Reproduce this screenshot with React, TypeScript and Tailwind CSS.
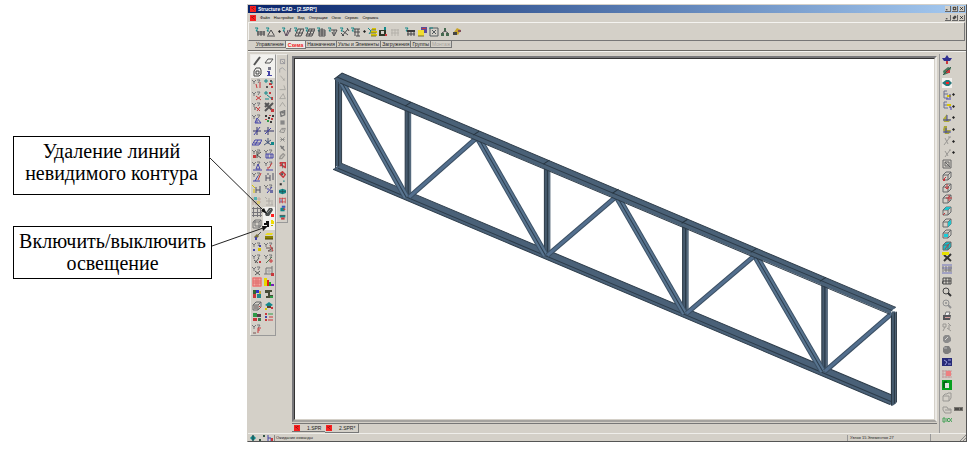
import type { ReactNode } from 'react';

type Part = { d: string; stroke?: string; fill?: string; w?: number };
type Icon = Part[];

// Drawing helpers: icons live on a 10x10 grid
const s = (d: string, stroke = '#4a4a4c', w = 1): Part => ({ d, stroke, w });
const f = (d: string, fill = '#3a3a3a'): Part => ({ d, fill });

const RED = '#c8383c';
const BLUE = '#4444a8';
const TEAL = '#12888a';
const GREEN = '#2f9a48';
const GRAY = '#9a9894';
const GOLD = '#d8c400';

const fork = s('M0 1L2 3L4 1M2 3V5M5 1H8L6 4', '#77777a');
const node = s('M0 2H4M2 0V4', TEAL);
const cube = s('M1 4H6V9H1ZM1 4L4 1H9L6 4M9 1V6L6 9', '#66696b');

const mainIcons: (Icon | 'arrow')[] = [
    [s('M0 1H3L1 4H3', TEAL), s('M2 5H10M3 4V9M6 4V9M9 4V9M2 7H10')],
    [s('M0 1H3L1 4H3', TEAL), s('M2 8L5 3L8 8M1 9H9')],
    'arrow',
    [s('M0 1H3L1 4H3', TEAL), s('M2 4L4 9L6 3M5 9L9 1M7 4H9', '#5a4a5c')],
    [s('M0 1H3L1 4H3', TEAL), s('M4 2H10L7 9H1ZM7 2L4 9M3 6H9')],
    [s('M0 1H3L1 4H3', TEAL), s('M4 2H10L7 9H1ZM7 2L4 9M3 4H9M2 7H8')],
    [s('M0 1H3L1 4H3', TEAL), s('M2 3H8V9H2ZM2 5H8M2 7H8M5 1V9')],
    [s('M0 1H3L1 4H3', TEAL), s('M3 3H9L6 9L4 5M6 3V7')],
    [s('M0 1H3L1 4H3', TEAL), s('M2 9L8 2M3 4L8 8M7 1L9 4M1 6L4 9')],
    [s('M0 1H3L1 4H3', TEAL), s('M3 2H9M3 5H9M4 2V9M7 2V9M5 9H9')],
    'arrow',
    [s('M1 1L4 4L2 7', TEAL), s('M5 2H9M4 5H10M4 8H10', GOLD, 2), s('M4 3H9M3 6H9M4 9H9', '#777733')],
    [f('M1 3H8V9H1Z', '#303828'), f('M3 4H6V7H3Z', '#d4d0c8'), f('M6 0H8V3H6Z', TEAL), f('M7 7H9V9H7Z', RED)],
    [s('M2 2V9M5 2V9M8 2V9M1 3H9M1 6H9', '#b4b1aa')],
];

const extraIcons: Icon[] = [
    [s('M0 1H3L1 4H3', TEAL), f('M2 3H10V5H2Z'), s('M3 5V9M6 5V9M9 5V9M2 7H10')],
    [f('M4 0H10V6H4Z', '#5a4d9c'), f('M1 3H7V9H1Z', '#f0dc30'), f('M5 1H9V2H5Z', RED), s('M1 9H7', '#77702c')],
    [s('M1 1H9M1 1V9M9 1V9M1 9H9', '#555c60'), s('M3 3L7 7M7 3L3 7', '#555c60'), s('M0 1H4', TEAL)],
    [f('M4 1H6V4H4ZM1 6H4V9H1ZM6 6H9V9H6Z', '#466a50'), s('M5 4L2 6M5 4L8 6')],
    [f('M2 5L5 1L9 3L6 8Z', '#c8a42a'), f('M1 5H5V8H1Z', '#444444'), f('M6 3H9V5H6Z', '#85505c')],
];

const leftIcons: (Icon | null)[] = [
    [s('M2 9L8 1', '#555555', 2)],
    [s('M1 7L4 3H9L6 7Z', '#555555')],
    [s('M2 4L4 1H8L9 3V7L7 9H2ZM4 4H7V7H4Z', '#444444')],
    [f('M4 0H7V3H4Z', '#777788'), f('M3 4H6V8H8V9H3V8H4V5H3Z', BLUE)],
    [fork, s('M4 5L5 9M8 3V9', RED)],
    [node, f('M6 1H8V3H6ZM2 7H4V9H2Z', '#555'), f('M5 4H8V6H5ZM7 7H9V9H7Z', RED), s('M8 2V5', TEAL)],
    [fork, s('M4 5L9 9M9 5L4 9', RED)],
    [node, f('M5 1H7V3H5ZM7 6H9V9H7Z', RED), s('M3 4L8 8M1 8H5', TEAL)],
    [fork, s('M4 5L8 9M8 5L5 9', RED), s('M3 5V8', '#555555')],
    [s('M1 1L8 8M9 1L1 9M5 1L1 5', '#555555', 2), f('M7 7H10V10H7Z', RED)],
    [fork, s('M5 4L3 9H9ZM5 6V9', BLUE)],
    [f('M1 1H3V3H1ZM4 3H6V5H4ZM8 1H10V3H8ZM6 7H8V9H6Z'), f('M5 1H7V2H5ZM1 5H3V6H1ZM7 4H9V6H7Z', RED), f('M3 6H5V8H3Z', GREEN)],
    [s('M1 5H9M5 1V9', '#333366'), s('M2 9L8 1', BLUE)],
    [s('M0 5H10M4 1V9', '#333366'), s('M1 8L7 2', BLUE)],
    [s('M0 8L3 3H10L7 8ZM3 8L6 3M2 6H9', BLUE)],
    [s('M4 1V7M1 3L7 8M0 8L7 3', '#445577'), f('M7 5H10V8H7Z', TEAL)],
    [fork, s('M5 2V9M9 3L5 6L9 9'), f('M1 6H4V9H1Z', RED)],
    [fork, s('M2 5H9V9H2ZM4 5V9M7 5V9', BLUE)],
    [fork, s('M6 3L4 8H8ZM1 9H10', BLUE)],
    [fork, s('M8 2L5 7M4 6V9', RED), s('M2 9H9', BLUE)],
    [fork, s('M9 1L6 8', RED), s('M3 9L6 4M1 9H8', BLUE)],
    [s('M2 3V9M2 6H6M6 3V9M9 1V8M4 1V3', '#555566')],
    [s('M0 1L3 4M2 9V5', GOLD), s('M4 3V9M8 2V9M4 6H8', '#555566')],
    [fork, s('M3 9L8 3M3 5H5', BLUE), f('M6 6H9V9H6Z', '#6d6da4')],
    [s('M1 1V9M4 1V9M7 1V9M1 3H9M1 6H9', '#c0aaa2'), f('M2 1H5V4H2Z', '#55b0b0'), f('M5 5H8V8H5Z', '#d8c870')],
    [s('M1 1L3 3M5 2V8M2 5H7M2 9H9M8 4V9', '#aeaaa5')],
    [s('M1.5 0V10M5.5 0V10M8.5 0V10M0 1.5H10M0 5.5H10M0 8.5H10', '#77757a')],
    [f('M1 7L5 1H8L9 3L5 9H2Z', '#4c5050'), s('M3 6L7 2', '#8a8e8e'), f('M7 7H10V10H7Z', '#ff2020')],
    [s('M1 3H7V9H1ZM1 3L3 1H9V7L7 9M7 3L9 1M3 1V7H9', '#777777')],
    [f('M0 4H2V2H5V8H3V6H0Z', '#101010'), f('M7 1H9V2H10V5H7Z', '#f0dc00'), f('M7 6H9V7H7Z', '#b9b100')],
    [s('M9 1L5 5', '#555'), s('M6 4L3 7', '#77703a', 3), f('M3 6H5V9H3Z', BLUE)],
    [f('M1 4L3 2H9L8 4Z', '#eadb20'), f('M1 5H9V8H1Z', '#8b8100'), s('M1 8H9', '#484300')],
    [fork, f('M6 6H9V9H6Z', GOLD), f('M1 7H3V9H1ZM7 3H9V5H7Z', BLUE)],
    [fork, s('M2 6L9 6L4 9H9', '#665555'), s('M6 3L9 9', RED)],
    [fork, s('M3 9L7 4M2 6L6 9', '#555'), f('M7 7H9V9H7Z', RED)],
    [fork, s('M2 9L8 3', '#557755'), s('M6 6H8V8H6Z', RED)],
    [fork, s('M3 5L8 9M8 5L3 9', '#555')],
    [s('M2 2H8V8H2ZM0 8H2M8 0V2', '#777777'), s('M2 5H8M5 2V8', '#aaaaaa'), f('M7 7H10V10H7Z', RED)],
    [f('M0 0H10V10H0Z', '#f3a7a0'), s('M1 1H9V9H1ZM1 4H9M1 6H9M4 1V9M6 1V9', '#e06a6a')],
    [f('M0 1H3V9H0Z', '#e8d800'), f('M3 3H5V9H3Z', '#dd2222'), f('M5 5H7V9H5Z', '#22aa22'), f('M7 7H10V9H7Z', '#7722bb')],
    [f('M1 1H4V5H1Z', '#336633'), f('M4 1H7V4H4Z', '#3333cc'), f('M7 2H9V6H7Z', '#ccaa33'), f('M1 5H4V9H1Z', RED), f('M5 5H9V9H5Z', '#22888c')],
    [f('M1 1H8V3H6V6H9V9H2V7H4V4H1Z', '#474c38'), f('M6 7H9V9H6Z', GREEN)],
    [cube, f('M2 4H6V8H2Z', '#958f8c'), s('M7 5L9 7', RED)],
    [f('M1 4L5 1L9 4L5 6Z', TEAL), f('M3 5H7V7H3Z', '#554433'), f('M1 7H3V9H1Z', GOLD), f('M7 6H9V8H7Z', RED)],
    [f('M1 1H5V5H1Z', GREEN), f('M5 2H9V5H5Z', '#5b3d49'), f('M1 6H5V9H1Z', RED), f('M6 6H9V9H6Z', '#39774b')],
    [f('M1 1H3V3H1ZM1 7H3V9H1Z', RED), f('M1 4H3V6H1Z', BLUE), s('M4 2H9', GREEN), s('M5 5H9M4 8H9', RED)],
    [fork, s('M6 9V4H9M6 6H8', RED), s('M1 9H4', '#775555')],
    null,
];

const sideIcons: Icon[] = [
    [s('M2 2H8V8H2ZM4 4L8 8', '#888890')],
    [s('M1 8V3L5 1L9 5', '#8f9298')],
    [s('M2 1L8 8M6 8L8 5', GRAY)],
    [s('M1 8H9L7 2', GRAY)],
    [s('M1 8L6 1L9 8Z', GRAY)],
    [s('M1 8L5 2L9 8', GRAY)],
    [s('M2 3L8 1V7L3 9ZM4 4H7', '#777777', 2)],
    [f('M2 2H8V8H2Z', '#888888')],
    [s('M1 7L4 2H9L7 8ZM4 4H7', '#777777')],
    [s('M2 2L8 8M8 2L2 8M2 5H8', '#777777')],
    [s('M2 1L8 8M3 5L7 2', '#777777', 2)],
    [s('M1 8L4 8L8 3L6 1L2 5Z', GRAY, 2)],
    [s('M1 1H9V9M1 1L8 8M1 5H5', RED, 2), s('M5 1V9', '#555')],
    [s('M1 4L5 1L9 5L6 9Z', RED, 2), f('M3 3H6V6H3Z', '#555')],
    [f('M1 6H4V9H1Z', '#333333'), f('M6 2H8V4H6Z', TEAL)],
    [f('M0 3L5 1L10 3V7L5 9L0 7Z', TEAL), s('M0 5H10M5 2V8', '#225555')],
    [s('M1 1V9M5 1V9M9 1V9M1 2H9M1 7H9', RED), s('M3 3V8', BLUE)],
    [f('M4 1H9V4H4Z', '#3f55c0'), f('M2 4H8V9H2Z', TEAL), f('M6 5H9V7H6Z', RED)],
    [f('M1 2H9V5H1Z', TEAL), f('M3 5H8V8H3Z', RED), s('M1 2H9', '#334444')],
];

const viewIcons: { icon: Icon; arrow?: boolean; pressed?: boolean; badge?: boolean }[] = [
    { icon: [f('M5 0L7 3H10L8 6H6V9H4V6H2L0 3H3Z', '#303090'), f('M4 6H6V9H4Z', RED)] },
    { icon: [f('M1 5L6 1L9 2L7 7L2 9Z', '#477a5f'), f('M4 4H8V7H4Z', RED), s('M1 9L9 1', '#345b4a')] },
    { icon: [f('M0 5L4 2H7L10 5L7 8H4Z', '#26777a'), f('M4 4H7V6H4Z', '#ff2020')], pressed: true },
    { icon: [s('M5 1H2V8H6M2 4H6', '#6a7090'), s('M5 6H9', GOLD, 2), s('M4 9H9M8 4V8', BLUE)], arrow: true },
    { icon: [s('M5 1H2V7H6M2 4H7', '#6a7090'), s('M5 4H9', GOLD, 2), s('M7 6H9V9', BLUE)], arrow: true },
    { icon: [f('M1 6L5 1V6H9L7 9H2Z', '#b0ac3b'), s('M1 7H9M5 2V8', '#444aa8')], arrow: true },
    { icon: [f('M2 1H5V5H9L7 9H3L1 5Z', '#a8a43a'), s('M1 7H9M4 3V8', '#444aa8')], arrow: true },
    { icon: [s('M3 2L6 8M8 1L2 9M6 1H9', GRAY)], arrow: true },
    { icon: [s('M3 3L6 8M8 2L3 9M7 2H9', GRAY)], arrow: true },
    { icon: [s('M1 1H9V9H1ZM3 3H7V7H3ZM3 3L8 8', '#666666')] },
    { icon: [cube, s('M1 9L4 6', RED), f('M1 8H3V10H1Z', RED)] },
    { icon: [cube, s('M5 1V6M3 4L5 6L7 4', RED)] },
    { icon: [cube, s('M4 4H10M7 1V7', RED)] },
    { icon: [cube, f('M2 4L4 1H9L6 4Z', '#22c2cc'), s('M1 9L3 7', RED)] },
    { icon: [cube, f('M6 4L9 2V6L6 9Z', '#22c2cc')] },
    { icon: [cube, f('M2 5H6V8H2Z', '#19ced8')] },
    { icon: [f('M1 4L4 1H9V6L6 9H1Z', '#16bec8'), cube, s('M7 3L3 8', RED)] },
    { icon: [s('M2 3L9 9M9 2L2 9', '#333333', 2), f('M0 0H7V3H0Z', '#e7e000')] },
    { icon: [s('M0 1H10M0 4H10M0 9H10', '#6f73bd'), s('M1 2V8M4 2V8M7 2V8M9 2V8M2 6H9', '#77777c')] },
    { icon: [s('M1 2H9V8H1ZM1 5H9M4 2V8M7 2V8M0 8L1 5', '#494949')] },
    { icon: [s('M7 4A3 3 0 1 1 1 4A3 3 0 1 1 7 4', '#444444'), s('M6 6L9 9', '#333333', 2)] },
    { icon: [s('M7 4A3 3 0 1 1 1 4A3 3 0 1 1 7 4M3 4H5M4 3V5', '#929292'), s('M6 6L9 9', '#929292', 2)] },
    { icon: [f('M3 4L4 1H8L7 4Z', '#eeeeee'), s('M3 4L4 1H8L7 4', '#777777'), f('M1 4H9L8 9H1Z', '#55565a'), f('M3 6H8V7H3Z', '#d9a0a0')] },
    { icon: [s('M1 2H4V5H1ZM6 1L9 4M3 5L1 9M5 6L9 9M7 3V7', GRAY)] },
    { icon: [f('M3 1H7L9 4V7L6 9H3L1 7V3Z', '#8b8b8b'), s('M6 3L3 6', '#d5d5d5')] },
    { icon: [f('M3 1H7L9 4V7L6 9H3L1 7V3Z', '#7d7d7d'), s('M2 3L5 3', '#bbbbbb')] },
    { icon: [f('M0 1H10V9H0Z', '#272b78'), s('M2 3L5 5L3 8M6 3H9M6 7H9', '#9b9edb')] },
    { icon: [s('M1 1V9M4 1V9M7 1V9M0 2H10M0 5H10M0 8H10', '#c0a0a0'), f('M4 2H9V7H4Z', '#ee8080')] },
    { icon: [f('M0 0H10V10H0Z', '#08a020'), f('M3 3H7V8H3Z', '#e4e4e4'), s('M2 8V2H5', '#053b0c')] },
    { icon: [s('M1 4L3 2H5L6 1H9V6L7 9H1ZM1 4H7V9', GRAY)] },
    { icon: [s('M1 3H5L6 5H9V9H3L1 6ZM3 6H9', GRAY)], badge: true },
    { icon: [s('M1 3V7H3V3ZM5 3V7M5 5L7 3M5 5L7 7M7 3L10 7M10 3L7 7', '#46a158')] },
];

const menus = ['Файл', 'Настройки', 'Вид', 'Операции', 'Окно', 'Сервис', 'Справка'];

const tabs = ['Управление', 'Схема', 'Назначения', 'Узлы и Элементы', 'Загружения', 'Группы', 'Монтаж'];

function Glyph({ parts }: { parts: Icon }) {
    return (
        <svg viewBox="0 0 10 10" className="block h-[10px] w-[10px] shrink-0" aria-hidden="true">
            {parts.map((p, i) => (
                <path key={i} d={p.d} fill={p.fill ?? 'none'} stroke={p.stroke ?? 'none'} strokeWidth={p.w} />
            ))}
        </svg>
    );
}

function ToolButton({ parts, label, pressed }: { parts: Icon; label: string; pressed?: boolean }) {
    return (
        <button
            type="button"
            aria-label={label}
            className={`flex items-center justify-center ${pressed ? 'bg-[#f2f1ee]' : ''}`}
        >
            <Glyph parts={parts} />
        </button>
    );
}

function Arrow() {
    return (
        <svg viewBox="0 0 3 3" className="block h-[3px] w-[3px] shrink-0" aria-hidden="true">
            <path d="M0 1.5L1.5 0L3 1.5L1.5 3Z" fill="#222" />
        </svg>
    );
}

// Red square with the application's logo mark
function AppMark() {
    return (
        <svg viewBox="0 0 6 6" className="block h-[6px] w-[6px] shrink-0" aria-hidden="true">
            <path d="M0 0H6V6H0Z" fill="#f82020" />
            <path d="M1.5 1.5L4.5 4.5M4.5 1.5H3L1.5 3" stroke="#8c1010" strokeWidth="0.7" fill="none" />
        </svg>
    );
}

function WindowButtons({ middle }: { middle: string }) {
    const marks = [
        { label: 'Свернуть', d: 'M1 4.5H3' },
        { label: 'Развернуть', d: middle },
        { label: 'Закрыть', d: 'M1.5 1.5L4.5 4.5M4.5 1.5L1.5 4.5' },
    ];
    return (
        <div className="ml-auto flex items-center gap-px pr-px">
            {marks.map((m) => (
                <button key={m.label} type="button" aria-label={m.label} className="border-r border-b border-[#666] bg-[#d4d0c8]">
                    <svg viewBox="0 0 6 6" className="block h-[5px] w-[5px]">
                        <path d={m.d} stroke="#111" strokeWidth="1" fill="none" />
                    </svg>
                </button>
            ))}
        </div>
    );
}

function Callout({ children }: { children: ReactNode }) {
    return (
        <div className="border border-black bg-white text-center font-['Liberation_Serif',serif] text-[20px] leading-[22px] text-black">
            {children}
        </div>
    );
}

// Members of the truss, in view coordinates
const posts = [
    [405, 109, 197],
    [544, 167, 255],
    [682, 226, 313],
    [821, 285, 371],
];
const braces = [
    [341, 81, 406, 197],
    [478, 138, 545, 255],
    [617, 197, 684, 313],
    [755, 256, 822, 371],
];
const struts = [
    [409, 197, 476, 138],
    [547, 255, 615, 197],
    [686, 313, 753, 256],
    [824, 371, 891, 313],
];

function Truss() {
    return (
        <svg viewBox="295 59 638 359" preserveAspectRatio="xMinYMin meet" className="block h-full w-full" role="img" aria-label="Ферма">
            {/* Bottom chord */}
            <path d="M333 169L341 163L892 395V405L889 404Z" fill="#4a6178" />
            <path d="M333 169L889 404M338 168L890 401M341 163L892 395" stroke="#2d3c4a" fill="none" />
            {/* End post */}
            <path d="M335 79H341V166H335Z" fill="#465c70" />
            <path d="M335.5 80V168M338.5 82V166M341.5 86V163" stroke="#2b3844" fill="none" />
            {posts.map(([x, y1, y2]) => (
                <g key={x}>
                    <path d={`M${x} ${y1}H${x + 6}V${y2 - 3}L${x + 2} ${y2}H${x}Z`} fill="#465a6d" />
                    <path d={`M${x} ${y1}V${y2}M${x + 3} ${y1}V${y2 - 1}`} stroke="#293846" fill="none" />
                    <path d={`M${x + 5} ${y1}V${y2 - 3}`} stroke="#5d7183" fill="none" />
                </g>
            ))}
            {braces.map(([x1, y1, x2, y2]) => (
                <g key={x1} fill="none">
                    <path d={`M${x1} ${y1}L${x2} ${y2}`} stroke="#3c5166" strokeWidth="7" />
                    <path d={`M${x1} ${y1}L${x2} ${y2}`} stroke="#58748f" strokeWidth="5" />
                    <path d={`M${x1} ${y1}L${x2} ${y2}`} stroke="#2c3d4e" strokeWidth="1" />
                </g>
            ))}
            {struts.map(([x1, y1, x2, y2]) => (
                <g key={x1} fill="none">
                    <path d={`M${x1} ${y1}L${x2} ${y2}`} stroke="#3a4e62" strokeWidth="5" />
                    <path d={`M${x1} ${y1}L${x2} ${y2}`} stroke="#536f8e" strokeWidth="3" />
                </g>
            ))}
            {/* Top chord */}
            <path d="M334 79L342 73L895 307L888 313L340 83Z" fill="#4a6177" />
            <path d="M334 79L342 73L895 307M337 77L891 310M340 83L889 314" stroke="#2d3b48" fill="none" />
            <path d="M405 106L411 102M473 135L479 131M543 164L549 160M612 193L618 189M681 223L687 219M750 252L756 248M819 281L825 277" stroke="#26343f" fill="none" />
            <path d="M890 313L893 309L895 312V403L892 405H890Z" fill="#465b6e" />
            <path d="M890.5 315V405M893.5 312V403M895.5 311V402" stroke="#2b3844" fill="none" />
            <path d="M892 310H896" stroke="#fff" strokeWidth="2" />
        </svg>
    );
}

export default function App() {
    return (
        <div className="relative flex min-h-screen bg-white pt-1 pr-[9px] pb-2 font-['Liberation_Sans',sans-serif] text-[5px] leading-[6px] text-[#222]">
            {/* Callouts */}
            <aside className="w-[247px] shrink-0 pt-[132px] pr-[35px] pl-[13px]">
                <div className="pr-[2px]">
                    <Callout>
                        <p className="px-1 pt-[3px] pb-[10px]">
                            Удаление линий
                            <br />
                            невидимого контура
                        </p>
                    </Callout>
                </div>
                <div className="mt-[31px]">
                    <Callout>
                        <p className="pt-[3px] pb-1 whitespace-nowrap">
                            Включить/выключить
                            <br />
                            освещение
                        </p>
                    </Callout>
                </div>
            </aside>

            {/* Application window */}
            <main className="flex min-w-0 flex-1 flex-col border border-[#d4d0c8] border-r-[#555] border-b-[#555] bg-[#d4d0c8]">
                {/* Title bar */}
                <header className="flex h-[8px] items-center gap-[2px] bg-linear-to-r from-[#0a246a] to-[#a6caf0] pl-[2px] font-bold text-white">
                    <AppMark />
                    <h1>Structure CAD - [2.SPR*]</h1>
                    <WindowButtons middle="M1.5 1.5H4.5V4.5H1.5Z" />
                </header>

                {/* Menu */}
                <nav className="flex h-[9px] items-center gap-[4px] pl-[2px] text-[4px] text-black">
                    <AppMark />
                    {menus.map((m) => (
                        <button key={m} type="button">{m}</button>
                    ))}
                    <WindowButtons middle="M1.5 2.5H3.5V4.5H1.5ZM2.5 1.5H4.5V3.5" />
                </nav>

                {/* Main toolbar */}
                <div className="mr-px flex h-[19px] items-center border border-[#f4f3f0] border-r-[#777] border-b-[#777] pl-[6px]">
                    <div className="flex w-[145px] items-center justify-between">
                        {mainIcons.map((icon, i) =>
                            icon === 'arrow' ? <Arrow key={i} /> : <ToolButton key={i} parts={icon} label={`Схема ${i + 1}`} />
                        )}
                    </div>
                    <div className="ml-[5px] flex w-[57px] items-center justify-between">
                        {extraIcons.map((icon, i) => (
                            <ToolButton key={i} parts={icon} label={`Сервис ${i + 1}`} />
                        ))}
                    </div>
                </div>

                {/* Tabs */}
                <div className="flex h-[10px] items-start border-b border-[#6d6b67] pl-[7px]">
                    {tabs.map((t) => (
                        <button
                            key={t}
                            type="button"
                            disabled={t === 'Монтаж'}
                            className={
                                t === 'Схема'
                                    ? 'h-[8px] border-r border-b border-[#777] bg-[#eceae6] px-[2px] font-bold text-[#f02020]'
                                    : 'h-[7px] border-r border-b border-[#777] px-px disabled:text-[#a5a29c]'
                            }
                        >
                            {t}
                        </button>
                    ))}
                </div>

                <div className="flex min-h-0 flex-1 border-t border-[#f4f3f0] pt-[2px]">
                    {/* Left tool palettes */}
                    <div className="ml-[2px] self-start border border-[#eceae6] border-r-[#999] border-b-[#999]">
                        <div className="grid h-[280px] w-[24px] auto-rows-fr grid-cols-2">
                            {leftIcons.map((icon, i) =>
                                icon ? (
                                    <ToolButton key={i} parts={icon} label={`Вид ${i + 1}`} pressed={i < 4 || i === 27 || i === 29} />
                                ) : (
                                    <span key={i} />
                                )
                            )}
                        </div>
                    </div>
                    <div className="self-start border border-[#eceae6] border-r-[#999] border-b-[#999] pt-[2px]">
                        <div className="grid h-[165px] w-[10px] auto-rows-fr">
                            {sideIcons.map((icon, i) => (
                                <button key={i} type="button" aria-label={`Элемент ${i + 1}`} className="flex items-center justify-center">
                                    <svg viewBox="0 0 10 10" className="block h-[7px] w-[7px]" aria-hidden="true">
                                        {icon.map((p, n) => (
                                            <path key={n} d={p.d} fill={p.fill ?? 'none'} stroke={p.stroke ?? 'none'} strokeWidth={p.w} />
                                        ))}
                                    </svg>
                                </button>
                            ))}
                        </div>
                    </div>

                    {/* Drawing area */}
                    <section className="ml-[4px] flex min-w-0 flex-1 flex-col pt-[2px]">
                        <div className="min-h-0 flex-1 border-2 border-[#77777a] border-r-[#eceae6] border-b-[#a5a39f]">
                            <div className="h-full border border-[#333] border-r-[#d4d0c8] border-b-[#d4d0c8] bg-white">
                                <Truss />
                            </div>
                        </div>
                        <div className="mt-px flex h-[10px] border-t border-[#777]">
                            <button type="button" className="flex h-[8px] w-[33px] items-center gap-[7px] border-b border-[#777] pl-[2px]">
                                <AppMark />
                                1.SPR
                            </button>
                            <button type="button" className="flex h-[9px] w-[34px] items-center gap-[7px] border-r border-b border-[#777] pl-px">
                                <AppMark />
                                2.SPR*
                            </button>
                        </div>
                    </section>

                    {/* View toolbar */}
                    <div className="ml-[2px] w-[27px] border-l border-[#999] pl-[2px]">
                        <div className="grid h-[372px] auto-rows-fr">
                            {viewIcons.map((v, i) => (
                                <div key={i} className="flex items-center">
                                    <ToolButton parts={v.icon} label={`Проекция ${i + 1}`} pressed={v.pressed} />
                                    {v.arrow && <Arrow />}
                                    {v.badge && (
                                        <svg viewBox="0 0 9 4" className="ml-[2px] block h-[4px] w-[9px]" aria-hidden="true">
                                            <path d="M0 0H9V4H0Z" fill="#77746f" />
                                            <path d="M1 2H3M4 1V3M6 2H8" stroke="#222" fill="none" />
                                        </svg>
                                    )}
                                </div>
                            ))}
                        </div>
                    </div>
                </div>

                {/* Status bar */}
                <footer className="flex h-[8px] items-center border-t border-[#efeeea] pl-[2px] text-[4px]">
                    <div className="flex w-[23px] justify-between">
                        <svg viewBox="0 0 6 6" className="block h-[6px] w-[6px]"><path d="M0 3L3 0L6 3L3 6Z" fill={TEAL} /><path d="M3 0V6" stroke="#244" /></svg>
                        <svg viewBox="0 0 6 6" className="block h-[6px] w-[6px]"><path d="M0 4H2V6H0ZM4 0H6V2H4Z" fill="#335544" /></svg>
                        <svg viewBox="0 0 6 6" className="block h-[6px] w-[6px]"><path d="M1 0V6M1 3H4V6" stroke={BLUE} fill="none" /><path d="M4 3H6V6H4Z" fill={RED} /></svg>
                    </div>
                    <p className="ml-px flex-1 border-l border-[#888] pl-px">Ожидание команды</p>
                    <p className="w-[83px] border-l border-[#999] pl-[2px]">Узлов 15 Элементов 27</p>
                    <p className="h-full w-[30px] border-l border-[#999]" />
                    <svg viewBox="0 0 6 6" className="block h-[6px] w-[6px]"><path d="M6 0L0 6M6 3L3 6" stroke="#888" fill="none" /></svg>
                </footer>
            </main>

            {/* Leader lines run from the callouts over the palette */}
            <svg viewBox="0 0 280 280" className="pointer-events-none absolute top-0 left-0 h-[280px] w-[280px]" aria-hidden="true">
                <path d="M209 157L264 211M212 246L266 227" stroke="#222" fill="none" />
                <path d="M267 214L261 211L264 208ZM268 226L262 226L263 231Z" fill="#111" />
            </svg>
        </div>
    );
}
